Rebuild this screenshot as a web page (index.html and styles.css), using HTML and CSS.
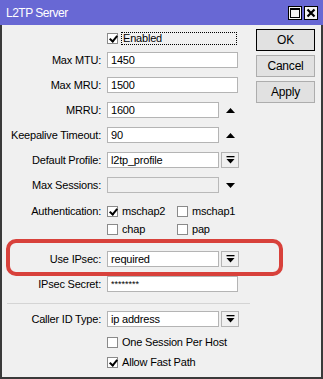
FILE: index.html
```html
<!DOCTYPE html>
<html lang="en">
<head>
    <title>L2TP Server</title>
    <link rel="stylesheet" href="styles.css">
</head>
<body>
<div class="window">
    <div class="titlebar">
        <span class="title">L2TP Server</span>
        <div class="tbtns">
            <div class="tbtn">
                <svg width="12" height="12" viewBox="0 0 12 12"><rect x="1.5" y="1.5" width="9" height="9" fill="none" stroke="#000" stroke-width="1"/><rect x="1" y="1" width="10" height="2" fill="#000"/></svg>
            </div>
            <div class="tbtn">
                <svg width="12" height="12" viewBox="0 0 12 12"><path d="M2.5 2.5 L9.5 9.5 M9.5 2.5 L2.5 9.5" stroke="#000" stroke-width="2.2"/></svg>
            </div>
        </div>
    </div>

    <div class="content">
        <div class="form">
            <div class="row enabled-row">
                <div class="label"></div>
                <div class="check">
                    <span class="box on"></span>
                    <span class="focus">Enabled</span>
                </div>
            </div>

            <div class="row first">
                <div class="label">Max MTU:</div>
                <div class="input wide">1450</div>
            </div>
            <div class="row">
                <div class="label">Max MRU:</div>
                <div class="input wide">1500</div>
            </div>
            <div class="row">
                <div class="label">MRRU:</div>
                <div class="input">1600</div>
                <svg class="tri" width="9" height="5" viewBox="0 0 9 5"><path d="M0 5 L4.5 0 L9 5 Z" fill="#000"/></svg>
            </div>
            <div class="row">
                <div class="label">Keepalive Timeout:</div>
                <div class="input">90</div>
                <svg class="tri" width="9" height="5" viewBox="0 0 9 5"><path d="M0 5 L4.5 0 L9 5 Z" fill="#000"/></svg>
            </div>
            <div class="row">
                <div class="label">Default Profile:</div>
                <div class="input">l2tp_profile</div>
                <div class="drop"><svg width="9" height="9" viewBox="0 0 9 9"><rect x="0.5" y="0" width="8" height="1.3" fill="#000"/><path d="M0.5 3 L8.5 3 L4.5 7.5 Z" fill="#000"/></svg></div>
            </div>
            <div class="row">
                <div class="label">Max Sessions:</div>
                <div class="input disabled"></div>
                <svg class="tri" width="9" height="5" viewBox="0 0 9 5"><path d="M0 0 L9 0 L4.5 5 Z" fill="#000"/></svg>
            </div>

            <div class="auth">
                <div class="row auth-row">
                    <div class="label">Authentication:</div>
                    <div class="check col"><span class="box on"></span><span>mschap2</span></div>
                    <div class="check"><span class="box"></span><span>mschap1</span></div>
                </div>
                <div class="row auth-row second">
                    <div class="label"></div>
                    <div class="check col"><span class="box"></span><span>chap</span></div>
                    <div class="check"><span class="box"></span><span>pap</span></div>
                </div>
            </div>

            <div class="row ipsec">
                <div class="label">Use IPsec:</div>
                <div class="input">required</div>
                <div class="drop"><svg width="9" height="9" viewBox="0 0 9 9"><rect x="0.5" y="0" width="8" height="1.3" fill="#000"/><path d="M0.5 3 L8.5 3 L4.5 7.5 Z" fill="#000"/></svg></div>
                <div class="highlight"></div>
            </div>
            <div class="row">
                <div class="label">IPsec Secret:</div>
                <div class="input wide secret">********</div>
            </div>

            <div class="sep"></div>

            <div class="row caller">
                <div class="label">Caller ID Type:</div>
                <div class="input">ip address</div>
                <div class="drop"><svg width="9" height="9" viewBox="0 0 9 9"><rect x="0.5" y="0" width="8" height="1.3" fill="#000"/><path d="M0.5 3 L8.5 3 L4.5 7.5 Z" fill="#000"/></svg></div>
            </div>
            <div class="row opt">
                <div class="label"></div>
                <div class="check"><span class="box"></span><span>One Session Per Host</span></div>
            </div>
            <div class="row opt last">
                <div class="label"></div>
                <div class="check"><span class="box on"></span><span>Allow Fast Path</span></div>
            </div>
        </div>

        <div class="buttons">
            <div class="btn default">OK</div>
            <div class="btn">Cancel</div>
            <div class="btn">Apply</div>
        </div>
    </div>
</div>
</body>
</html>
```

FILE: styles.css
```css
body{
    margin: 0;
    font-family: "Liberation Sans", Arial, sans-serif;
    font-size: 11px;
    letter-spacing: -0.2px;
    color: #000;
}

.window{
    width: 323px;
    height: 379px;
    box-sizing: border-box;
    background-color: #f0f0f0;
    border-left: 2px solid #3a3a3a;
    border-right: 2px solid #3a3a3a;
    border-bottom: 2px solid #3a3a3a;
    display: flex;
    flex-direction: column;
}

.titlebar{
    height: 25px;
    margin: 0 -2px;
    background-color: #6868d4;
    display: flex;
    align-items: center;
    justify-content: space-between;
    padding: 0 5px 0 6px;
}

.title{
    color: #fff;
    font-size: 12px;
    letter-spacing: -0.5px;
}

.tbtns{
    display: flex;
    gap: 2px;
}

.tbtn{
    width: 14px;
    height: 14px;
    box-sizing: border-box;
    border: 1px solid #000;
    background-color: #f4f4f4;
    display: flex;
    align-items: center;
    justify-content: center;
}

.content{
    display: flex;
    flex: 1;
}

.form{
    flex: 1;
    padding-top: 5px;
}

.row{
    display: flex;
    align-items: center;
    height: 16px;
    margin-top: 9px;
}

.enabled-row{
    height: 14px;
    margin-top: 1px;
}

.row.first{
    margin-top: 7px;
}

.label{
    width: 99px;
    flex: none;
    text-align: right;
    margin-right: 6px;
    white-space: nowrap;
}

.input{
    width: 112px;
    height: 16px;
    box-sizing: border-box;
    border: 1px solid #b4b4b4;
    background-color: #fff;
    padding-left: 3px;
    line-height: 14px;
    white-space: nowrap;
}

.input.wide{
    width: 131px;
}

.input.disabled{
    background-color: #f0f0f0;
    border-color: #b9b9b9;
}

.secret{
    font-size: 9px;
    letter-spacing: 0;
}

.tri{
    margin-left: 7px;
}

.drop{
    width: 18px;
    height: 16px;
    box-sizing: border-box;
    margin-left: 2px;
    border: 1px solid #b4b4b4;
    background-color: #f0f0f0;
    display: flex;
    align-items: center;
    justify-content: center;
}

.check{
    display: flex;
    align-items: center;
    gap: 4px;
    white-space: nowrap;
}

.check .focus{
    width: 116px;
    height: 13px;
    box-sizing: border-box;
    border: 1px dotted #000;
    line-height: 11px;
    padding-left: 1px;
    margin-left: -1px;
}

.check.col{
    width: 70px;
}

.box{
    width: 11px;
    height: 11px;
    box-sizing: border-box;
    border: 1px solid #8a8a8a;
    background-color: #fff;
    flex: none;
    position: relative;
}

.box.on::after{
    content: "";
    position: absolute;
    left: 3px;
    top: 0px;
    width: 3px;
    height: 6px;
    border-right: 2px solid #000;
    border-bottom: 2px solid #000;
    transform: rotate(40deg);
}

.auth-row{
    height: 18px;
}

.auth-row.second{
    margin-top: 0;
}

.ipsec{
    margin-top: 13px;
    position: relative;
}

.highlight{
    position: absolute;
    left: 4px;
    top: -12px;
    width: 277px;
    height: 37px;
    box-sizing: border-box;
    border: 4px solid #d8413b;
    border-radius: 10px;
}

.sep{
    height: 1px;
    margin: 11px 6px 0 5px;
    background-color: #d4d4d4;
}

.row.caller{
    margin-top: 7px;
}

.row.opt{
    margin-top: 7px;
}

.row.opt.last{
    margin-top: 4px;
}

.buttons{
    width: 59px;
    margin-right: 6px;
    padding-top: 4px;
    display: flex;
    flex-direction: column;
    gap: 4px;
}

.btn{
    height: 22px;
    box-sizing: border-box;
    border: 1px solid #adadad;
    background-color: #e1e1e1;
    display: flex;
    align-items: center;
    justify-content: center;
    font-size: 12px;
}

.btn.default{
    border: 1px solid #000;
    box-shadow: inset 0 0 0 1px #e1e1e1;
}
```
